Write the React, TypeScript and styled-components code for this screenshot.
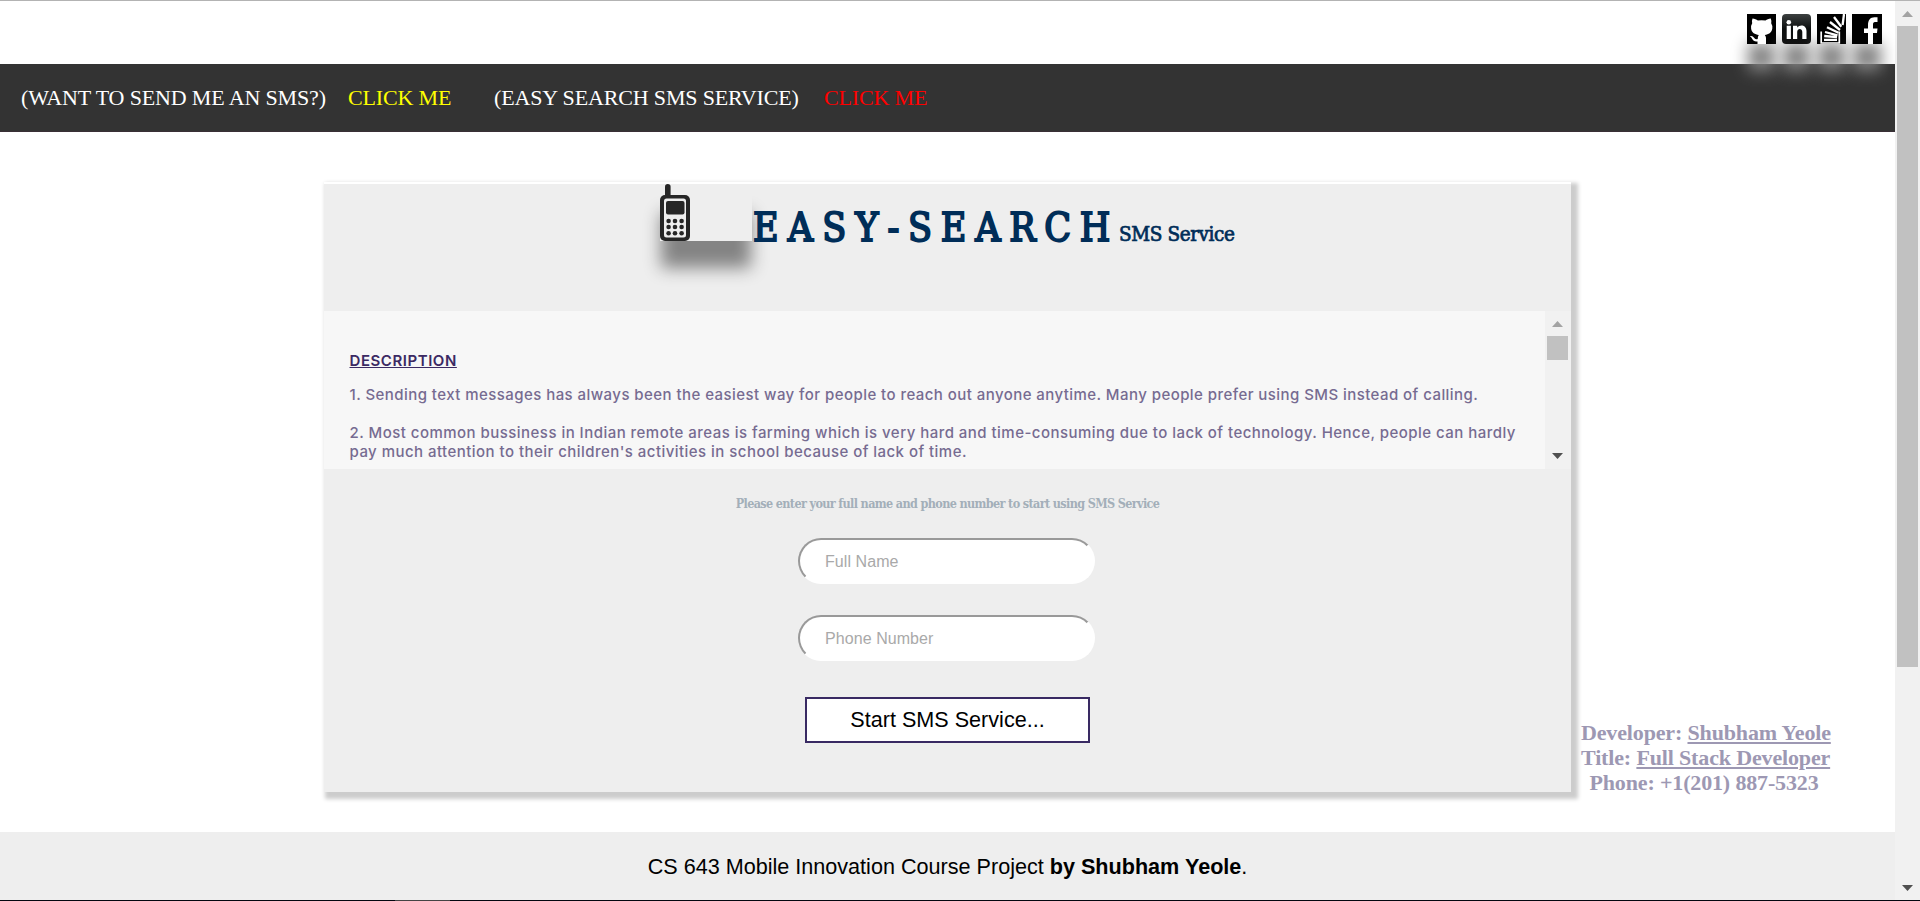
import React from "react";
import styled, { createGlobalStyle } from "styled-components";

const Global = createGlobalStyle`
  * { box-sizing: border-box; }
  html, body { margin: 0; padding: 0; height: 901px; overflow: hidden; background: #fff; }
`;

const sans = `"Liberation Sans", Arial, sans-serif`;
const serif = `"Liberation Serif", "Times New Roman", serif`;
const slab = `"DejaVu Serif Condensed", "DejaVu Serif", serif`;

const Screen = styled.div`
  width: 1920px;
  height: 901px;
  display: flex;
  flex-direction: column;
  border-top: 1px solid #b3b3b3;
  overflow: hidden;
`;

const Viewport = styled.div`
  flex: 1;
  display: flex;
  min-height: 0;
`;

const Page = styled.div`
  flex: 1;
  display: flex;
  flex-direction: column;
`;

const TopBar = styled.div`
  height: 63px;
  padding: 13px 13px 0 0;
  display: flex;
  justify-content: flex-end;
  gap: 6px;
`;

const floating = `box-shadow: 0 28px 16px -1px #848484;`;

const Social = styled.a<{ $width?: number; $radius?: number }>`
  display: block;
  width: ${(p) => p.$width ?? 29}px;
  height: 30px;
  border-radius: ${(p) => p.$radius ?? 0}px;
  position: relative;
  ${floating}
  svg { display: block; width: 100%; height: 100%; }
`;

const Nav = styled.nav`
  height: 68px;
  flex: none;
  background: #333;
  border-bottom: 1px solid #392f36;
  display: flex;
  align-items: center;
  padding: 1px 0 0 21px;
  font: 22px/26px ${serif};
  letter-spacing: -0.15px;
  color: #fff;
  white-space: nowrap;
`;

const NavLabel = styled.span<{ $width: number }>`
  width: ${(p) => p.$width}px;
`;

const NavLink = styled.a<{ $color: string; $width: number }>`
  color: ${(p) => p.$color};
  width: ${(p) => p.$width}px;
`;

const Main = styled.main`
  height: 700px;
  flex: none;
  display: flex;
  align-items: flex-start;
  padding: 50px 0 0 324px;
`;

const Card = styled.section`
  width: 1247px;
  height: 610px;
  flex: none;
  border-top: 2px solid #fff;
  background: #eee;
  box-shadow: 4px 4px 4px 3px #ccc;
  display: flex;
  flex-direction: column;
  align-items: center;
`;

const CardHeader = styled.header`
  height: 127px;
  flex: none;
  width: 100%;
  padding-left: 336px;
  display: flex;
  align-items: flex-start;
  color: #002d58;
  font-family: ${slab};
  white-space: nowrap;
`;

const PhoneArt = styled.div`
  width: 92px;
  height: 57px;
  flex: none;
  ${floating}
  svg { display: block; }
`;

const Title = styled.h1`
  margin: 21px 0 0;
  width: 368px;
  padding-left: 1px;
  font-size: 39px;
  font-weight: 400;
  line-height: 46px;
  -webkit-text-stroke: 1.8px #002d58;
`;

const Spaced = styled.span<{ $spacing: number }>`
  letter-spacing: ${(p) => p.$spacing}px;
`;

const Subtitle = styled.span`
  font-size: 20.5px;
  line-height: 24px;
  margin-top: 38px;
  margin-left: -1px;
  letter-spacing: -0.4px;
  -webkit-text-stroke: 0.7px #002d58;
`;

const Description = styled.div`
  width: 100%;
  height: 158px;
  flex: none;
  display: flex;
  background: #f7f7f7;
`;

const Copy = styled.div`
  flex: 1;
  padding: 40px 0 0 25.5px;
  font: 500 15px/19px Inter, sans-serif;
  color: #766b91;
  white-space: nowrap;
`;

const CopyHeading = styled.h2`
  margin: 0 0 15px;
  font-size: 15px;
  line-height: 19px;
  font-weight: 600;
  letter-spacing: 0.55px;
  color: #3b2a63;
  text-decoration: underline;
`;

const Paragraph = styled.p`
  margin: 0 0 19px;
`;

const Line = styled.span<{ $spacing: number }>`
  display: block;
  letter-spacing: ${(p) => p.$spacing}px;
`;

const Track = styled.div<{ $inner?: boolean }>`
  width: ${(p) => (p.$inner ? 26 : 25)}px;
  flex: none;
  background: #f1f1f1;
  display: flex;
  flex-direction: column;
  align-items: center;
  padding: ${(p) => (p.$inner ? "10px 3px 10px 2px" : "10px 2px 9px")};
`;

const Thumb = styled.div<{ $height: number }>`
  width: 21px;
  height: ${(p) => p.$height}px;
  margin-top: 9px;
  background: #c1c1c1;
`;

const ArrowSvg = styled.svg<{ $last?: boolean }>`
  display: block;
  flex: none;
  margin-top: ${(p) => (p.$last ? "auto" : "0")};
`;

const Form = styled.form`
  display: flex;
  flex-direction: column;
  align-items: center;
`;

const Hint = styled.p`
  margin: 26px 0 0;
  height: 17px;
  font: 700 12.5px/18px ${slab};
  letter-spacing: -0.64px;
  color: #a3afb9;
  white-space: nowrap;
`;

const Field = styled.input<{ $gap: number }>`
  display: block;
  margin: ${(p) => p.$gap}px 2px 0 0;
  width: 297px;
  height: 46px;
  padding: 2px 25px 0;
  border: 2px solid #fff;
  border-top-color: #999;
  border-left-color: #999;
  border-radius: 23px;
  background: #fff;
  font: 16px ${sans};
  letter-spacing: 0.07px;
  outline: none;
  &::placeholder { color: #a9a9a9; opacity: 1; }
`;

const Start = styled.button`
  margin: 36px 0 0;
  width: 285px;
  height: 46px;
  padding: 0;
  border: 2px solid #392a63;
  background: #fff;
  color: #000;
  font: 21.6px ${sans};
`;

const Developer = styled.aside`
  width: 249px;
  flex: none;
  margin: 538px 0 0 10px;
  text-align: center;
  font: bold 22px/25px ${serif};
  letter-spacing: -0.15px;
  color: #9d98b3;
  white-space: nowrap;
  a { text-decoration: underline; }
`;

const DevLines = styled.div`
  padding-right: 3px;
`;

const Footer = styled.footer`
  flex: 1;
  background: #eee;
  display: flex;
  align-items: center;
  justify-content: center;
  padding-top: 1px;
  font: 21.6px/26px ${sans};
  color: #000;
  white-space: pre;
`;

const BottomEdge = styled.div`
  height: 1px;
  flex: none;
  padding-left: 395px;
  background: #03060f;
  &::before { content: ""; display: block; width: 55px; height: 1px; background: #444; }
`;

const Arrow = ({ up }: { up?: boolean }) => (
  <ArrowSvg width="11" height="6" viewBox="0 0 11 6" $last={!up}>
    <path d={up ? "M0 6L5.5 0L11 6Z" : "M0 0H11L5.5 6Z"} fill={up ? "#a3a3a3" : "#505050"} />
  </ArrowSvg>
);

const Phone = () => (
  <svg width="30" height="57" viewBox="0 0 30 57">
    <rect x="5" y="0" width="5.6" height="16" rx="2.8" fill="#262626" />
    <rect x="0" y="11" width="30" height="46" rx="5" fill="#262626" />
    <rect x="4" y="14.5" width="22" height="39" rx="2.5" fill="#eee" />
    <rect x="6" y="17" width="18.5" height="13.5" rx="2" fill="#262626" />
    {[37, 43, 49.2].map((y) =>
      [8.6, 15, 21.6].map((x) => <circle key={`${x}-${y}`} cx={x} cy={y} r="2.3" fill="#262626" />)
    )}
  </svg>
);

export default function App() {
  return (
    <Screen>
      <Global />
      <Viewport>
        <Page>
          <TopBar>
            <Social>
              <svg viewBox="0 0 29 30">
                <rect width="29" height="30" fill="#000" />
                <path d="M5.500 4.600C7.500 4.600 9.500 5.600 10.800 6.600Q14.500 5.800 18.500 6.600C20 5.600 21.500 4.600 23.800 4.600Q24.700 7 24.200 9.200Q25.700 11.500 25.300 14.500C24.700 18.800 21.500 20.400 17.800 21Q19 22.300 19 24V30H10.500V27.400C7.500 27.800 6.200 26.600 5.300 25Q4.300 23 2.800 22.200Q5.500 21.300 7.300 24Q8.500 25.700 10.700 25Q10.800 22.200 11.800 21C8 20.400 4.600 18.800 4.100 14.500Q3.700 11.500 5.200 9.200Q4.600 7 5.500 4.600Z" fill="#fff" />
              </svg>
            </Social>
            <Social $radius={4}>
              <svg viewBox="0 0 29 30">
                <defs>
                  <linearGradient id="gloss" x1="0" y1="0" x2="0" y2="1">
                    <stop offset="0" stopColor="#3c4040" />
                    <stop offset="0.5" stopColor="#0c0e0e" />
                    <stop offset="1" stopColor="#111" />
                  </linearGradient>
                </defs>
                <rect width="29" height="30" rx="4" fill="url(#gloss)" />
                <circle cx="6.800" cy="8.300" r="2.300" fill="#fff" />
                <path d="M4.700 11.800H8.900V25H4.700ZM11 11.800H15.200V13.500C18 10 24.500 11 24.500 17V25H20.300V18C20.300 14 15.200 14 15.200 18V25H11Z" fill="#fff" />
              </svg>
            </Social>
            <Social>
              <svg viewBox="0 0 29 30">
                <rect width="29" height="30" fill="#000" />
                <path d="M4.200 17.500V29H22.300V17.500" fill="none" stroke="#fff" strokeWidth="1.700" />
                <path d="M7 25.800H20M7.200 22L20 23.200M8 18L20.500 21.300M10 13.300L21.500 18.800M13 8L23 16M17 3L24.300 12.800M27 0L25.600 11" stroke="#fff" strokeWidth="2.300" />
              </svg>
            </Social>
            <Social $width={30}>
              <svg viewBox="0 0 30 30">
                <rect width="30" height="30" fill="#000" />
                <path d="M16 30V19H12V14.500H16V11C16 6 18.500 3.300 22.500 3.300H25.500V8H23C21.500 8 21 9 21 10.500V14.500H25.500L25 19H21V30Z" fill="#fff" />
              </svg>
            </Social>
          </TopBar>
          <Nav>
            <NavLabel $width={327}>(WANT TO SEND ME AN SMS?)</NavLabel>
            <NavLink $color="#ff0" $width={146}>CLICK ME</NavLink>
            <NavLabel $width={330}>(EASY SEARCH SMS SERVICE)</NavLabel>
            <NavLink $color="#f00" $width={120}>CLICK ME</NavLink>
          </Nav>
          <Main>
            <Card>
              <CardHeader>
                <PhoneArt><Phone /></PhoneArt>
                <Title>
                  <Spaced $spacing={9.1}>EASY</Spaced>
                  <Spaced $spacing={8.7}>-SEARCH</Spaced>
                </Title>
                <Subtitle>SMS Service</Subtitle>
              </CardHeader>
              <Description>
                <Copy>
                  <CopyHeading>DESCRIPTION</CopyHeading>
                  <Paragraph>
                    <Line $spacing={0.44}>1. Sending text messages has always been the easiest way for people to reach out anyone anytime. Many people prefer using SMS instead of calling.</Line>
                  </Paragraph>
                  <Paragraph>
                    <Line $spacing={0.467}>2. Most common bussiness in Indian remote areas is farming which is very hard and time-consuming due to lack of technology. Hence, people can hardly</Line>
                    <Line $spacing={0.46}>pay much attention to their children's activities in school because of lack of time.</Line>
                  </Paragraph>
                </Copy>
                <Track $inner>
                  <Arrow up />
                  <Thumb $height={24} />
                  <Arrow />
                </Track>
              </Description>
              <Form>
                <Hint>Please enter your full name and phone number to start using SMS Service</Hint>
                <Field $gap={26} placeholder="Full Name" />
                <Field $gap={31} placeholder="Phone Number" />
                <Start type="button">Start SMS Service...</Start>
              </Form>
            </Card>
            <Developer>
              <DevLines>
                Developer: <a>Shubham Yeole</a><br />
                Title: <a>Full Stack Developer</a><br />
                Phone: +1(201) 887-5323
              </DevLines>
            </Developer>
          </Main>
          <Footer>CS 643 Mobile Innovation Course Project <b>by Shubham Yeole</b>.</Footer>
        </Page>
        <Track>
          <Arrow up />
          <Thumb $height={641} />
          <Arrow />
        </Track>
      </Viewport>
      <BottomEdge />
    </Screen>
  );
}
